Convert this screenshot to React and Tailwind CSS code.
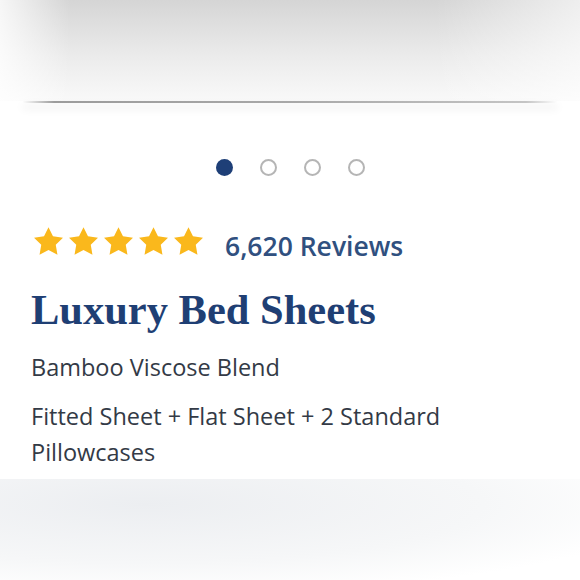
export default function App() {
  const dots = [true, false, false, false];

  return (
    <div className="w-[580px] h-[580px] bg-white overflow-hidden font-['Open_Sans',sans-serif]">
      {/* Faded photo edge */}
      <div className="h-[101px] bg-[linear-gradient(to_right,rgba(255,255,255,0.8),rgba(255,255,255,0)_12%,rgba(255,255,255,0)_75%,rgba(255,255,255,0.6)),linear-gradient(to_bottom,#d5d5d5,#ebebeb_55%,#f9f9f9)]" />
      <div className="mx-[22px] h-[2px] bg-[linear-gradient(to_right,rgba(160,160,160,0),#9c9c9c_6%,#a8a8a8_50%,#c4c4c4_94%,rgba(200,200,200,0))] shadow-[0_5px_9px_rgba(0,0,0,0.14)]" />

      {/* Carousel dots */}
      <div className="mt-[56px] flex justify-center items-center gap-[27px]">
        {dots.map((active, i) => (
          <span
            key={i}
            className={
              active
                ? "w-[17px] h-[17px] rounded-full bg-[#1e3f77]"
                : "w-[17px] h-[17px] rounded-full border-2 border-[#b5b5b5]"
            }
          />
        ))}
      </div>

      {/* Rating */}
      <div className="mt-[51px] pl-[34px] flex items-start">
        <div className="flex gap-[6px]">
          {[0, 1, 2, 3, 4].map((i) => (
            <svg key={i} viewBox="2 2 20 19.02" className="w-[29px] h-[28px]">
              <path
                d="M12 2l3.09 6.26L22 9.27l-5 4.87 1.18 6.88L12 17.77l-6.18 3.25L7 14.14 2 9.27l6.91-1.01L12 2z"
                fill="#fab81c"
              />
            </svg>
          ))}
        </div>
        <p className="ml-[22px] mt-[3px] text-[26.5px] leading-[32px] font-semibold text-[#30507f]">6,620 Reviews</p>
      </div>

      {/* Title + details */}
      <div className="pl-[31px] max-w-[480px]">
        <h1 className="mt-[24px] font-['Liberation_Serif',serif] font-bold text-[42.5px] leading-[48px] text-[#1f3f74]">
          Luxury Bed Sheets
        </h1>
        <p className="mt-[15px] text-[23.5px] leading-[36px] text-[#333a46]">Bamboo Viscose Blend</p>
        <p className="mt-[13px] text-[23.5px] leading-[36px] text-[#333a46]">
          Fitted Sheet + Flat Sheet + 2 Standard Pillowcases
        </p>
      </div>

      {/* Next section, faded */}
      <div className="mt-[9px] h-[101px] bg-[radial-gradient(ellipse_at_25%_25%,#eceef1,#f6f7f8_55%,#ffffff_85%)]" />
    </div>
  );
}
